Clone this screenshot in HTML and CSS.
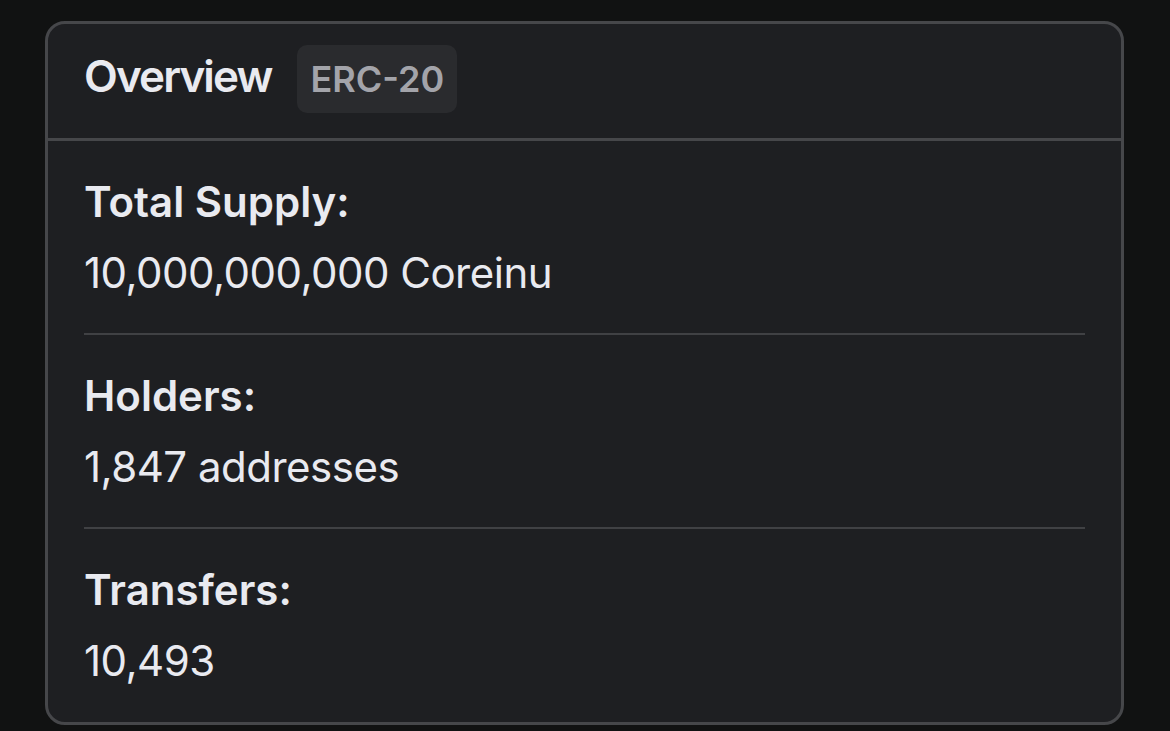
FILE: index.html
```html
<!DOCTYPE html>
<html>
<head>
    <meta charset="UTF-8">
    <title>Overview</title>
    <link rel="stylesheet" href="styles.css">
</head>
<body>
    <div class="card">
        <div class="card-header">
            <h2>Overview</h2>
            <span class="badge">ERC-20</span>
        </div>
        <div class="card-body">
            <div class="item">
                <div class="label">Total Supply:</div>
                <div class="value">10,000,000,000 Coreinu</div>
            </div>
            <div class="item">
                <div class="label">Holders:</div>
                <div class="value">1,847 addresses</div>
            </div>
            <div class="item">
                <div class="label">Transfers:</div>
                <div class="value">10,493</div>
            </div>
        </div>
    </div>
</body>
</html>
```

FILE: styles.css
```css
body {
    font-family: Inter, "Noto Sans", sans-serif;
    margin: 0;
    padding: 21px 0 0 45px;
    background-color: #111212;
    color: #e9eaf0;
}
.card {
    width: 1073px;
    background-color: #1e1f22;
    border: 3px solid #46474a;
    border-radius: 20px;
    overflow: hidden;
}
.card-header {
    display: flex;
    align-items: baseline;
    gap: 26px;
    padding: 21px 36px 25px;
    border-bottom: 3px solid #46474a;
}
.card-header h2 {
    margin: 0;
    font-size: 44px;
    font-weight: 600;
    line-height: 50px;
    letter-spacing: -1.9px;
}
.badge {
    background-color: #2a2b2e;
    color: #a3a4aa;
    font-size: 36px;
    font-weight: 600;
    line-height: 44px;
    padding: 12px 13px;
    border-radius: 10px;
}
.card-body {
    padding: 0 36px;
}
.item {
    padding: 36px 0 35px;
    border-bottom: 2px solid #404144;
}
.item:last-child {
    border-bottom: none;
    padding-bottom: 36px;
}
.label {
    font-size: 42px;
    font-weight: 600;
    line-height: 50px;
}
.value {
    font-size: 42px;
    font-weight: 400;
    line-height: 50px;
    margin-top: 21px;
    letter-spacing: -0.5px;
}
```
